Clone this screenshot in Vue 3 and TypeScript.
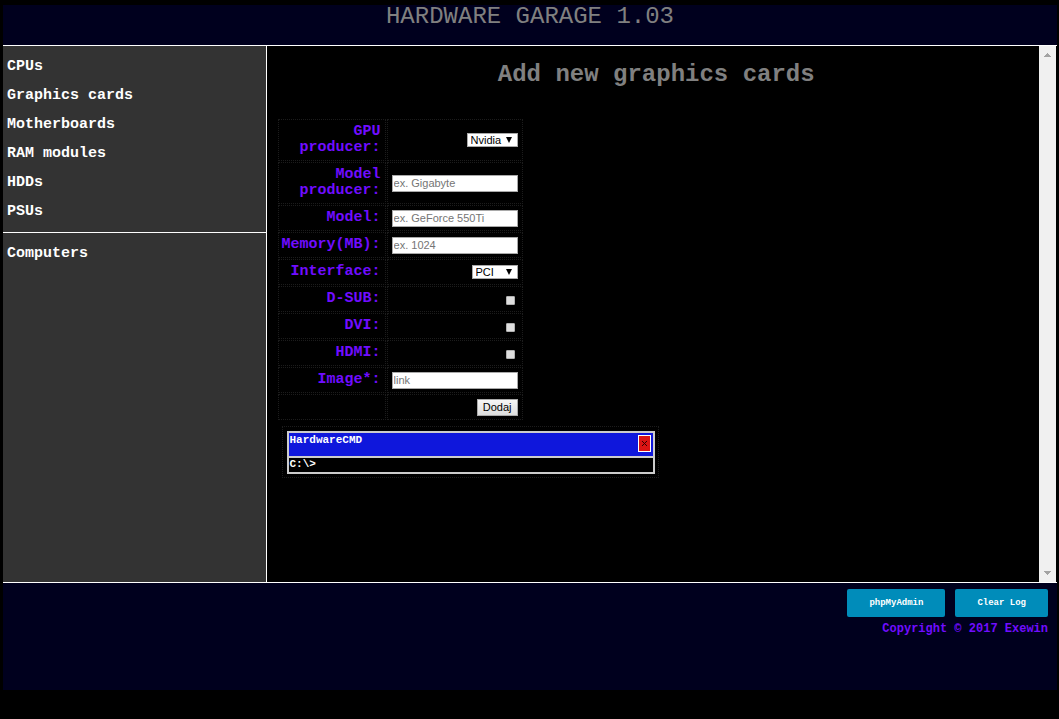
<script setup lang="ts">
import { ref } from 'vue'

const parts: string[] = ['CPUs', 'Graphics cards', 'Motherboards', 'RAM modules', 'HDDs', 'PSUs']

interface Field {
  id: string
  label: string
  kind: 'select' | 'text' | 'check'
  options?: string[]
  hint?: string
}

const fields: Field[] = [
  { id: 'gpu', label: 'GPU producer:', kind: 'select', options: ['Nvidia', 'AMD'] },
  { id: 'producer', label: 'Model producer:', kind: 'text', hint: 'ex. Gigabyte' },
  { id: 'model', label: 'Model:', kind: 'text', hint: 'ex. GeForce 550Ti' },
  { id: 'memory', label: 'Memory(MB):', kind: 'text', hint: 'ex. 1024' },
  { id: 'interface', label: 'Interface:', kind: 'select', options: ['PCI', 'AGP'] },
  { id: 'dsub', label: 'D-SUB:', kind: 'check' },
  { id: 'dvi', label: 'DVI:', kind: 'check' },
  { id: 'hdmi', label: 'HDMI:', kind: 'check' },
  { id: 'image', label: 'Image*:', kind: 'text', hint: 'link' },
]

const cmdOpen = ref(true)
const command = ref('')
</script>

<template>
  <div class="page">
    <header class="top">
      <div class="title">HARDWARE GARAGE 1.03</div>
    </header>

    <div class="middle">
      <nav class="side">
        <ul class="menu">
          <li v-for="p in parts" :key="p"><a href="#">{{ p }}</a></li>
        </ul>
        <ul class="menu second">
          <li><a href="#">Computers</a></li>
        </ul>
      </nav>

      <main class="content">
        <h1>Add new graphics cards</h1>
        <form @submit.prevent>
          <table class="fields">
            <tbody>
              <tr v-for="f in fields" :key="f.id">
                <th scope="row"><label :for="f.id">{{ f.label }}</label></th>
                <td>
                  <div class="slot">
                    <span v-if="f.kind === 'select'" class="pick" :class="f.id">
                      <select :id="f.id">
                        <option v-for="o in f.options" :key="o">{{ o }}</option>
                      </select>
                      <svg class="caret" width="6" height="6" viewBox="0 0 6 6" aria-hidden="true">
                        <path d="M0 0h6L3 6z" fill="#000" />
                      </svg>
                    </span>
                    <input v-else-if="f.kind === 'text'" :id="f.id" class="text" type="text" :placeholder="f.hint" />
                    <input v-else :id="f.id" class="check" type="checkbox" />
                  </div>
                </td>
              </tr>
              <tr>
                <th></th>
                <td><div class="slot"><button class="submit" type="submit">Dodaj</button></div></td>
              </tr>
            </tbody>
          </table>
        </form>

        <section v-if="cmdOpen" class="cmd">
          <div class="window">
            <div class="bar">
              <span>HardwareCMD</span>
              <button class="close" type="button" aria-label="Close" @click="cmdOpen = false">
                <svg width="5" height="5" viewBox="0 0 5 5" aria-hidden="true">
                  <path d="M0 0l5 5M5 0L0 5" stroke="#300" stroke-width="1" />
                </svg>
              </button>
            </div>
            <div class="prompt">
              <label for="command">C:\&gt;</label>
              <input id="command" v-model="command" type="text" />
            </div>
          </div>
        </section>
      </main>

      <div class="scroll" aria-hidden="true">
        <svg width="7" height="4" viewBox="0 0 7 4" shape-rendering="crispEdges"><path d="M3 0h1v1h1v1h1v1h1v1H0V3h1V2h1V1h1z" fill="#a3a3a3" /></svg>
        <svg width="7" height="4" viewBox="0 0 7 4" shape-rendering="crispEdges"><path d="M0 0h7v1H6v1H5v1H4v1H3V3H2V2H1V1H0z" fill="#a3a3a3" /></svg>
      </div>
    </div>

    <footer class="bottom">
      <div class="actions">
        <button type="button">phpMyAdmin</button>
        <button type="button">Clear Log</button>
      </div>
      <div class="copy">Copyright © 2017 Exewin</div>
    </footer>
  </div>
</template>

<style>
body {
  background: #000;
}
</style>

<style scoped>
.page {
  box-sizing: border-box;
  min-height: 100vh;
  padding: 5px 2px 29px 3px;
  display: flex;
  flex-direction: column;
  background: #000;
  color: #fff;
  font: bold 15px/16px "Liberation Mono", monospace;
}

.top {
  height: 40px;
  background: #00001e;
  border-bottom: 1px solid #fff;
}

.title {
  color: #808080;
  font-size: 24px;
  font-weight: normal;
  line-height: 24px;
  text-align: center;
}

.middle {
  flex: 1;
  display: flex;
}

.side {
  flex: 0 0 25%;
  box-sizing: border-box;
  background: #333;
  border-right: 1px solid #fff;
}

.menu {
  list-style: none;
  margin: 0;
  padding: 6px 4px;
  line-height: 29px;
}

.menu a {
  color: #fff;
  text-decoration: none;
}

.second {
  border-top: 1px solid #fff;
}

.content {
  flex: 1;
  padding: 14px 4px 0 11px;
}

h1 {
  margin: 0 0 28px;
  color: #808080;
  font-size: 24px;
  line-height: 30px;
  text-align: center;
}

.fields {
  border-collapse: separate;
  border-spacing: 1px;
  margin: 0 -1px;
}

.fields th,
.fields td {
  box-sizing: border-box;
  border: 1px dotted #1c1c1c;
  padding: 4px;
}

.fields th {
  width: 108px;
  padding-left: 3px;
  color: #700dff;
  text-align: right;
}

.fields td {
  width: 136px;
}

.slot {
  height: 16px;
  display: flex;
  align-items: center;
  justify-content: flex-end;
}

.text {
  box-sizing: border-box;
  width: 100%;
  height: 17px;
  flex: none;
  margin: 0;
  padding: 0 1px;
  border: 1px solid #a9a9a9;
  background: #fff;
  color: #000;
  font: 11px "Liberation Sans", Arial, sans-serif;
}

.text::placeholder {
  color: #757575;
}

.pick {
  position: relative;
  display: flex;
}

.pick select {
  box-sizing: border-box;
  appearance: none;
  width: 51px;
  height: 14px;
  margin: 0;
  padding: 0 0 0 3px;
  border: 1px solid #a9a9a9;
  border-radius: 0;
  background: #fff;
  color: #000;
  font: 11px/12px "Liberation Sans", Arial, sans-serif;
}

.pick.interface select {
  width: 46px;
}

.caret {
  position: absolute;
  right: 6px;
  top: 4px;
  pointer-events: none;
}

.check {
  appearance: none;
  box-sizing: border-box;
  width: 9px;
  height: 9px;
  margin: 2px 3px 0 0;
  border: 1px solid #b0b0b0;
  border-radius: 1px;
  background: #dedede;
}

.check:checked {
  background: #700dff;
}

.submit {
  box-sizing: border-box;
  height: 17px;
  flex: none;
  margin: 0;
  padding: 0 5px;
  border: 1px solid #a9a9a9;
  background: linear-gradient(#f6f6f6, #dedede);
  color: #000;
  font: 11px "Liberation Sans", Arial, sans-serif;
}

.cmd {
  box-sizing: border-box;
  width: 377px;
  max-width: 100%;
  margin: 5px 0 0 4px;
  padding: 4px 3px 3px 4px;
  border: 1px dotted #1c1c1c;
  font-size: 11px;
  line-height: 14px;
}

.window {
  border: 2px solid #ccc;
}

.bar {
  display: flex;
  justify-content: space-between;
  height: 23px;
  padding: 0 2px 0 1px;
  background: #0f17dc;
  border-bottom: 2px solid #ccc;
}

.close {
  display: flex;
  align-items: center;
  justify-content: center;
  box-sizing: border-box;
  width: 13px;
  height: 17px;
  margin: 2px 0 0;
  padding: 0;
  border: 1px solid #fff;
  background: #dc1414;
}

.prompt {
  display: flex;
  height: 14px;
  padding-left: 1px;
  line-height: 12px;
}

.prompt input {
  flex: 1;
  min-width: 0;
  padding: 0;
  border: 0;
  outline: 0;
  background: transparent;
  color: #fff;
  font: inherit;
}

.scroll {
  width: 17px;
  margin-right: 1px;
  padding: 7px 0;
  box-sizing: border-box;
  display: flex;
  flex-direction: column;
  align-items: center;
  justify-content: space-between;
  background: #f0f0f0;
}

.bottom {
  box-sizing: border-box;
  min-height: 108px;
  padding: 6px 9px 0;
  border-top: 1px solid #fff;
  background: #00001e;
}

.actions {
  display: flex;
  justify-content: flex-end;
  gap: 10px;
}

.actions button {
  height: 28px;
  padding: 0 22px;
  border: 0;
  border-radius: 2px;
  background: #008cba;
  color: #fff;
  font: bold 9px "Liberation Mono", monospace;
}

.copy {
  margin-top: 4px;
  color: #700dff;
  font-size: 12px;
  text-align: right;
}
</style>
